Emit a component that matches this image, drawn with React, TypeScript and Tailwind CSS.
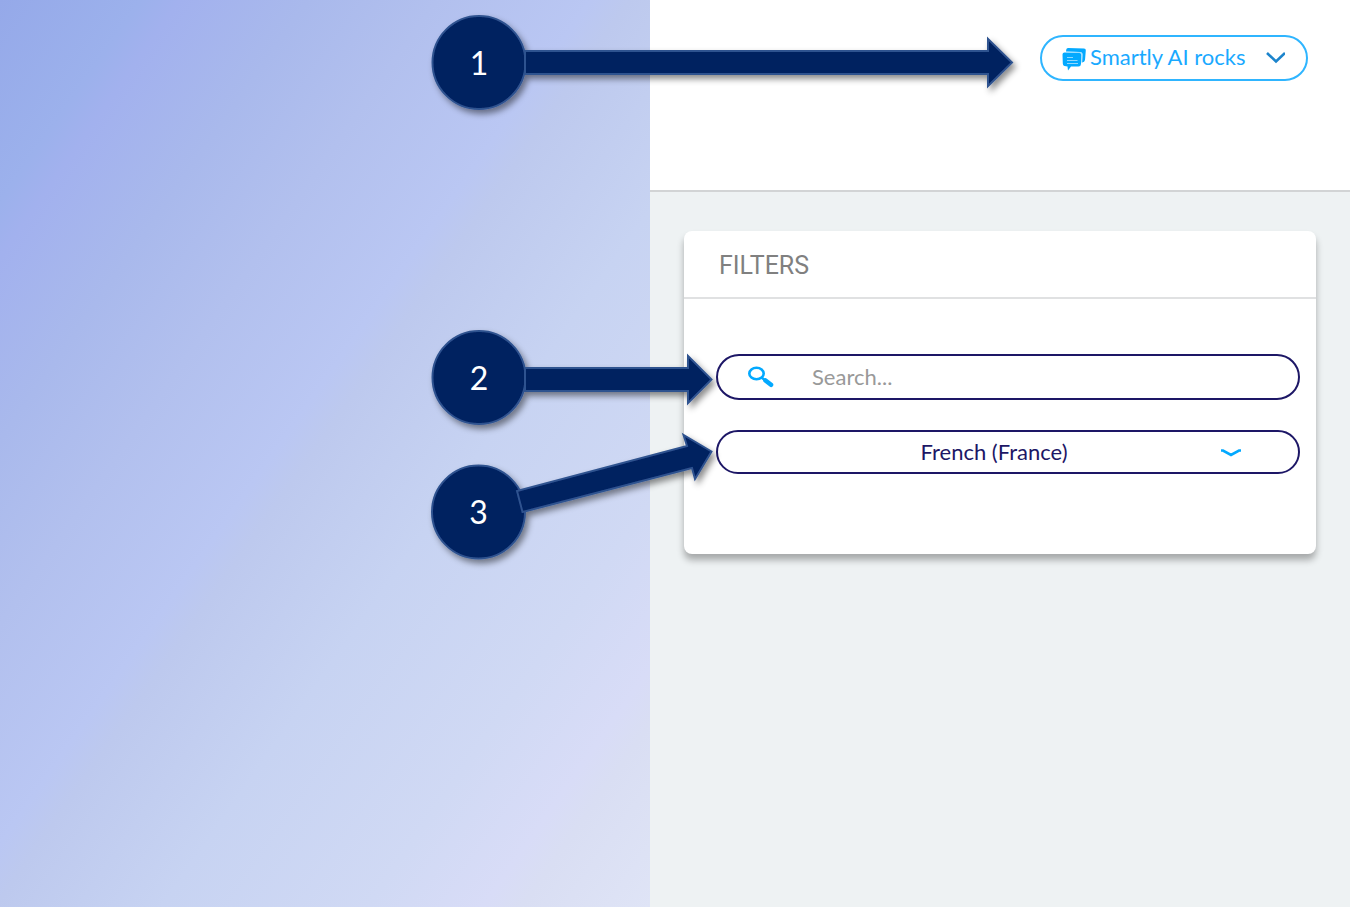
import React, { useState } from 'react';

const languages = ['French (France)', 'English (United States)', 'Spanish (Spain)'];

const ChatIcon = () => (
  <svg width="24" height="28" viewBox="0 0 24 28" aria-hidden="true" className="shrink-0">
    <path d="M6 5l16 .5q2 .2 1.800 2L23 17q-.3 2-3 2.500l.5-8q0-2.500-2.500-2.500L4 8.500l.3-2Q4.500 5 6 5Z" fill="#03a9ff" />
    <path d="M2.500 9.500l15 .5q2 .2 1.900 2L19 21q-.2 2.500-2.500 2.500H9L6 27.500l-.5-4-3-.5Q.8 22.500.8 20.500L.5 11.500q0-2 2-2Z" fill="#03a9ff" />
    <path d="M4 9l14 .5q2.300.2 2.200 2.500l-.4 7.500" fill="none" stroke="#7dd2ff" strokeWidth="0.800" />
    <path d="M5 14.500h6M5 17.500h10.500M5 20.500h11" stroke="#8fd8ff" strokeWidth="1" />
  </svg>
);

const SearchIcon = () => (
  <svg width="26" height="22" viewBox="0 0 26 22" aria-hidden="true" className="shrink-0">
    <ellipse cx="8.500" cy="7.500" rx="7.200" ry="5.800" fill="none" stroke="#03a9ff" strokeWidth="2.600" />
    <path d="M13.500 11.500l4 3" stroke="#03a9ff" strokeWidth="2.600" />
    <path d="M17.500 14.500l5.500 4.300" stroke="#03a9ff" strokeWidth="4.600" strokeLinecap="round" />
  </svg>
);

// Numbered marker with its arrow, both in the same svg space
const Callout = ({ label, cx, cy, arrow }: { label: string; cx: number; cy: number; arrow: string }) => (
  <g stroke="#2f528f" strokeWidth="2">
    <g fill="#002060" filter="url(#calloutShadow)">
      <circle cx={cx} cy={cy} r="46.500" />
      <polygon points={arrow} />
    </g>
    <text x={cx} y={cy + 12} textAnchor="middle" stroke="none" fill="#fff" className="font-['Lato',sans-serif] text-[32px]">
      {label}
    </text>
  </g>
);

const App = () => {
  const [search, setSearch] = useState('');
  const [language, setLanguage] = useState(languages[0]);

  return (
    <div className="relative flex min-h-screen w-full overflow-hidden font-['Lato',sans-serif]">
      {/* Gradient side */}
      <aside className="w-[650px] shrink-0 bg-[linear-gradient(125deg,#95a9e9_0%,#9cb1ec_11%,#a2b1ee_14%,#a9b9ec_24%,#b2c0ee_34%,#bac7f3_46%,#bdc9ee_49%,#c7d3f2_62%,#d0d9f4_78%,#d8dcf7_87%,#d9def3_90%,#dfe4f6_100%)]" />

      {/* Application side */}
      <main className="flex min-w-0 flex-1 flex-col bg-[#eef2f3]">
        <header className="flex h-48 items-start justify-end border-b-2 border-[#d2d4d5] bg-white px-[42px] pt-[35px]">
          <button type="button" className="flex h-[46px] w-[268px] items-center rounded-full border-2 border-[#2fb5ff] pb-0.5 pl-5 text-[22px] text-[#1aa9ff]">
            <ChatIcon />
            <span className="ml-1 whitespace-nowrap leading-7">Smartly AI rocks</span>
            <svg width="20" height="14" viewBox="0 0 20 14" aria-hidden="true" className="ml-5 shrink-0">
              <path d="M2 3l9 8.500L20 3" fill="none" stroke="#1c84cc" strokeWidth="2.600" />
            </svg>
          </button>
        </header>

        <section className="mx-[34px] mt-[39px] rounded-lg bg-white pb-20 shadow-[0_6px_7px_rgba(0,0,0,0.3)]">
          <h2 className="border-b-2 border-[#e0e1e2] px-[35px] pt-[17px] pb-[13px] font-['Roboto',sans-serif] text-[25px] leading-9 text-[#808080]">
            FILTERS
          </h2>
          <form className="flex flex-col gap-[30px] pt-[55px] pr-4 pl-8" onSubmit={(e) => e.preventDefault()}>
            <label className="flex h-[46px] items-center rounded-full border-2 border-[#1d1766] pl-[30px]">
              <SearchIcon />
              <input
                type="text"
                aria-label="Search"
                placeholder="Search..."
                value={search}
                onChange={(e) => setSearch(e.target.value)}
                className="ml-[38px] min-w-0 flex-1 text-[22px] leading-7 text-[#1d1766] outline-none placeholder:text-[#999999]"
              />
            </label>
            <div className="relative">
              <select
                aria-label="Language"
                value={language}
                onChange={(e) => setLanguage(e.target.value)}
                className="h-[44px] w-full appearance-none rounded-full border-2 border-[#1d1766] pr-7 text-center text-[22px] leading-7 text-[#1d1766] outline-none [text-align-last:center]"
              >
                {languages.map((name) => (
                  <option key={name}>{name}</option>
                ))}
              </select>
              <svg width="22" height="8" viewBox="0 0 22 8" aria-hidden="true" className="pointer-events-none absolute top-[19px] right-[58px]">
                <path d="M1 1.500h2L11 6l8-4.500H21" fill="none" stroke="#03a9ff" strokeWidth="2.600" />
              </svg>
            </div>
          </form>
        </section>
      </main>

      {/* Callouts over the page */}
      <svg width="1350" height="600" viewBox="0 0 1350 600" className="pointer-events-none absolute top-0 left-0">
        <defs>
          <filter id="calloutShadow" filterUnits="userSpaceOnUse" x="400" y="0" width="660" height="600">
            <feDropShadow dx="3" dy="4" stdDeviation="3" floodColor="#000" floodOpacity="0.45" />
          </filter>
        </defs>
        <Callout label="1" cx={479} cy={62.5} arrow="525,51 988,51 988,39 1012,62.500 988,86 988,74 525,74" />
        <Callout label="2" cx={479} cy={377.5} arrow="525,368 688,368 688,356 711.500,379.500 688,403 688,391 525,391" />
        <Callout label="3" cx={478.5} cy={512} arrow="517,491 687,446 683.500,435 711.500,451.500 695,479 692,468 522.500,512" />
      </svg>
    </div>
  );
};

export default App;
